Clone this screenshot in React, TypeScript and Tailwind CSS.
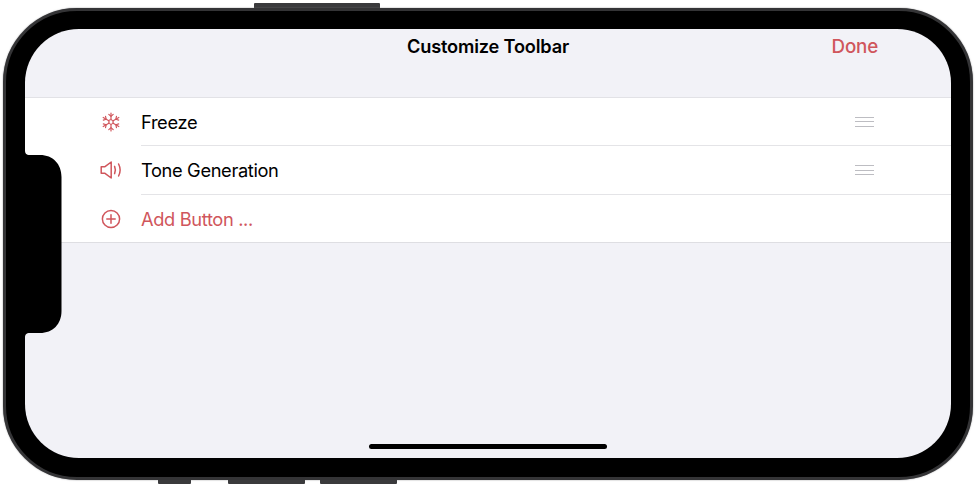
import React from 'react';

const RED = '#d0565c';

function SnowflakeIcon() {
  const arm = (
    <g>
      <path d="M10 8V1" />
      <path d="M7.800 2.400 10 4.400l2.200-2" />
    </g>
  );
  return (
    <svg width="20" height="20" viewBox="0 0 20 20" fill="none" stroke={RED} strokeWidth="1.200" strokeLinecap="round" strokeLinejoin="round">
      {[0, 60, 120, 180, 240, 300].map((deg) => (
        <g key={deg} transform={`rotate(${deg} 10 10)`}>{arm}</g>
      ))}
      <path d="M10 7.500 12.200 8.750v2.500L10 12.500l-2.200-1.250v-2.500z" strokeWidth="0.900" />
    </svg>
  );
}

function SpeakerIcon() {
  return (
    <svg className="-mt-px" width="22" height="18" viewBox="0 0 22 18" fill="none" stroke={RED} strokeWidth="1.500" strokeLinecap="round" strokeLinejoin="round">
      <path d="M1.200 5.700h3.800L11.200 1v16L5 12.300H1.200z" />
      <path d="M14.600 5.400c1 2.300 1 4.900 0 7.200" />
      <path d="M18.600 3c1.900 3.700 1.900 8.300 0 12" />
    </svg>
  );
}

function AddIcon() {
  return (
    <svg width="20" height="20" viewBox="0 0 20 20" fill="none" stroke={RED} strokeWidth="1.500" strokeLinecap="round">
      <circle cx="10" cy="10" r="8.600" />
      <path d="M10 5.800v8.400M5.800 10h8.400" />
    </svg>
  );
}

function Handle() {
  return (
    <div className="flex w-[19px] flex-col gap-[3.500px]">
      <div className="h-px bg-[#bdbdc2]" />
      <div className="h-px bg-[#bdbdc2]" />
      <div className="h-px bg-[#bdbdc2]" />
    </div>
  );
}

function Row({ icon, label, red, handle, last, height }: { icon: React.ReactNode; label: string; red?: boolean; handle?: boolean; last?: boolean; height: string }) {
  return (
    <div className={`flex items-stretch pl-[66px] ${height}`}>
      <div className="mr-[10px] flex w-[40px] items-center justify-center">{icon}</div>
      <div className={`flex flex-1 items-center justify-between pr-[77px] ${last ? '' : 'border-b border-[#e4e4e7]'}`}>
        <span className={`mt-[2px] text-[18.300px] tracking-[-0.02em] ${red ? 'text-[#d0565c]' : 'text-black'}`}>{label}</span>
        {handle && <Handle />}
      </div>
    </div>
  );
}

export default function App() {
  return (
    <div className="flex h-[492px] w-[975px] flex-col bg-white font-['Inter','Liberation_Sans',sans-serif]">
      {/* Top button */}
      <div className="flex h-[8px] items-end pl-[254px]">
        <div className="h-[5px] w-[126px] rounded-t-[1px] bg-[#3a3a3c]" />
      </div>

      {/* Phone body */}
      <div className="ml-[3px] flex h-[472px] w-[970px] rounded-[74px] border-[3px] border-[#343436] bg-black px-[19px] pt-[18px] pb-[19px] shadow-[0_0_1.500px_#77777a]">
        <div className="relative flex flex-1 flex-col overflow-hidden rounded-[54px] bg-[#f2f2f7]">
          <div className="grid h-[69px] grid-cols-[1fr_auto_1fr] items-start border-b border-[#e2e2e6] pt-[5px]">
            <div />
            <div className="text-[18.200px] leading-[24px] font-semibold tracking-[-0.01em] text-black">Customize Toolbar</div>
            <div className="pt-px pr-[73px] text-right text-[18.800px] leading-[24px] font-medium tracking-[-0.01em] text-[#d0565c]">Done</div>
          </div>

          <div className="bg-white">
            <Row height="h-[48px]" icon={<SnowflakeIcon />} label="Freeze" handle />
            <Row height="h-[49px]" icon={<SpeakerIcon />} label="Tone Generation" handle />
            <Row height="h-[47px]" icon={<AddIcon />} label="Add Button ..." red last />
          </div>
          <div className="h-px bg-[#dedee2]" />

          <div className="mt-auto mb-[9px] h-[5px] w-[238px] self-center rounded-full bg-black" />

          {/* Sensor housing */}
          <svg className="absolute top-[121px] left-0" width="37" height="188" viewBox="0 0 37 188" fill="black">
            <path d="M0 0c0 3.500 1 5 5 5h10c13 0 21.500 9 21.500 22v134c0 13-8.500 22-21.500 22H5c-4 0-5 1.500-5 5z" />
          </svg>
        </div>
      </div>

      {/* Bottom buttons */}
      <div className="flex h-[4px] items-start pl-[158px]">
        <div className="h-[4px] w-[33px] rounded-b-[1px] bg-[#3a3a3c]" />
        <div className="ml-[37px] h-[4px] w-[77px] rounded-b-[1px] bg-[#3a3a3c]" />
        <div className="ml-[15px] h-[4px] w-[77px] rounded-b-[1px] bg-[#3a3a3c]" />
      </div>
    </div>
  );
}
